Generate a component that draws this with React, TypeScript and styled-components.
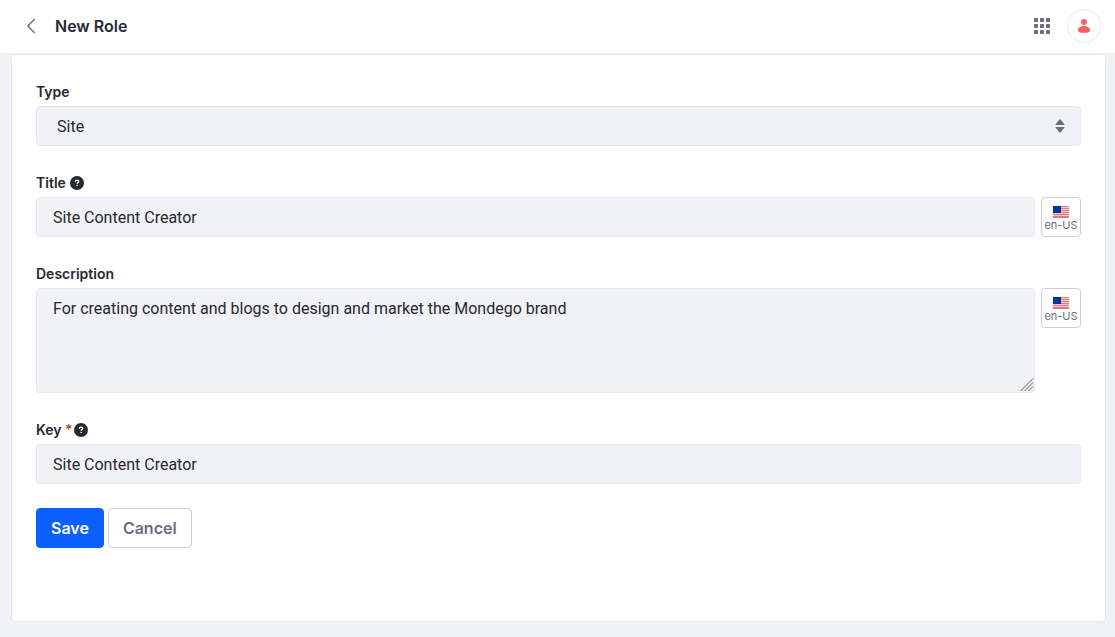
import React from "react";
import styled, { createGlobalStyle } from "styled-components";

const Global = createGlobalStyle`
  *, *::before, *::after { box-sizing: border-box; }
  body {
    margin: 0;
    background: #f1f2f5;
    color: #272833;
    font-family: Inter, "Liberation Sans", sans-serif;
    font-size: 16px;
    line-height: 24px;
  }
  button, input, select, textarea { font: inherit; color: inherit; margin: 0; }
`;

const Header = styled.header`
  display: flex;
  align-items: center;
  height: 53px;
  padding: 0 14px 1px 23px;
  background: #fff;
`;

const BackLink = styled.a`
  display: flex;
  width: 16px;
  height: 16px;
  margin-right: 16px;
  color: #6b6c7e;
`;

const Heading = styled.h1`
  flex: 1;
  margin: 0;
  font-size: 16px;
  font-weight: 600;
`;

const IconButton = styled.button`
  display: flex;
  align-items: center;
  justify-content: center;
  width: 32px;
  height: 32px;
  padding: 0;
  border: 0;
  background: none;
  color: #6b6c7e;
`;

const AvatarButton = styled(IconButton)`
  width: 34px;
  height: 34px;
  margin-left: 9px;
  border: 1px solid #e7e7ed;
  border-radius: 50%;
  color: #ff5f5f;
`;

const Card = styled.main`
  margin: 1px 9px 15px 11px;
  padding: 26px 24px 73px;
  border: 1px solid #e7e7ed;
  border-radius: 4px;
  background: #fff;
`;

const Group = styled.div`
  margin-bottom: 26px;
`;

const LastGroup = styled(Group)`
  margin-bottom: 24px;
`;

const LabelRow = styled.div<{ $tight?: boolean }>`
  display: flex;
  align-items: center;
  gap: ${(p) => (p.$tight ? 1 : 4)}px;
  height: 21px;
  margin-bottom: 4px;
  font-size: 14px;
  font-weight: 600;
  line-height: 21px;
`;

const Required = styled.span`
  color: #b95000;
`;

const Row = styled.div`
  display: flex;
  align-items: flex-start;
  gap: 6px;
`;

const Field = styled.div`
  position: relative;
  display: flex;
  flex: 1;
`;

const Input = styled.input`
  flex: 1;
  min-width: 0;
  height: 40px;
  padding: 0 16px;
  border: 1px solid #e7e7ed;
  border-radius: 4px;
  background: #f1f2f5;
  outline: 0;
  font-family: Roboto, "Liberation Sans", sans-serif;
`;

const Select = styled(Input).attrs({ as: "select" })`
  padding: 2px 32px 0 20px;
  appearance: none;
`;

const TextArea = styled(Input).attrs({ as: "textarea" })`
  height: 105px;
  padding: 8px 16px;
  resize: vertical;
  &::-webkit-resizer { display: none; }
`;

const SelectMark = styled.svg`
  position: absolute;
  top: 12px;
  right: 13px;
  pointer-events: none;
`;

const Grip = styled.svg`
  position: absolute;
  right: 1px;
  bottom: 1px;
  pointer-events: none;
`;

const Button = styled.button<{ $primary?: boolean }>`
  height: 40px;
  padding: 0 14px;
  border: 1px solid ${(p) => (p.$primary ? "#0b5fff" : "#cdced9")};
  border-radius: 4px;
  background: ${(p) => (p.$primary ? "#0b5fff" : "#fff")};
  color: ${(p) => (p.$primary ? "#fff" : "#6b6c7e")};
  font-weight: 600;
`;

const LocaleButton = styled(Button)`
  display: flex;
  flex-direction: column;
  align-items: center;
  justify-content: center;
  gap: 1px;
  width: 40px;
  padding: 3px 0 0;
  font-size: 11px;
  font-weight: 400;
  line-height: 12px;
`;

const Actions = styled.div`
  display: flex;
  gap: 4px;
`;

const Help = () => (
  <svg width="14" height="14" viewBox="0 0 14 14" role="img" aria-label="Help">
    <circle cx="7" cy="7" r="7" fill="#272833" />
    <path d="M5.3 5.7C5.4 4.7 6.1 4.2 7 4.2s1.7.5 1.7 1.3c0 1.1-1.6 1.1-1.6 2.2" fill="none" stroke="#fff" strokeWidth="1.3" />
    <rect x="6.4" y="8.7" width="1.4" height="1.4" rx=".5" fill="#fff" />
  </svg>
);

const Locale = () => (
  <LocaleButton type="button">
    <svg width="16" height="12" viewBox="0 0 16 12" aria-hidden="true">
      <rect width="16" height="12" fill="#f5c9cc" />
      {[0, 2, 4, 6, 8, 10].map((y) => (
        <rect key={y} y={y} width="16" height="1" fill="#df7b81" />
      ))}
      <rect y="11" width="16" height="1" fill="#df7b81" />
      <rect width="8" height="7" fill="#0035a0" />
    </svg>
    en-US
  </LocaleButton>
);

export default function App() {
  return (
    <>
      <Global />
      <Header>
        <BackLink href="#" aria-label="Back">
          <svg width="16" height="16" viewBox="0 0 16 16" fill="none" stroke="currentColor" strokeWidth="1.5" strokeLinecap="round" strokeLinejoin="round">
            <path d="M11.3 1.5 4.8 8l6.5 6.5" />
          </svg>
        </BackLink>
        <Heading>New Role</Heading>
        <IconButton type="button" aria-label="Applications">
          <svg width="16" height="16" viewBox="0 0 16 16" fill="currentColor">
            {[0, 6, 12].map((y) => [0, 6, 12].map((x) => <rect key={`${x}-${y}`} x={x} y={y} width="4" height="4" rx=".4" />))}
          </svg>
        </IconButton>
        <AvatarButton type="button" aria-label="User profile">
          <svg width="12" height="14" viewBox="0 0 12 14" fill="currentColor">
            <circle cx="6" cy="3" r="3" />
            <path d="M6 7c3.600 0 6 1.700 6 4.100C12 13.300 10.300 14 6 14s-6-.7-6-2.900C0 8.700 2.400 7 6 7Z" />
          </svg>
        </AvatarButton>
      </Header>
      <Card>
        <form onSubmit={(e) => e.preventDefault()}>
          <Group>
            <LabelRow><label htmlFor="type">Type</label></LabelRow>
            <Field>
              <Select id="type">
                <option>Site</option>
              </Select>
              <SelectMark width="16" height="16" viewBox="0 0 16 16" fill="#6b6c7e" aria-hidden="true">
                <path d="M3.500 6.500 7.400 1.500Q8 .9 8.600 1.500L12.500 6.500Q12.700 7 12 7H4Q3.300 7 3.500 6.500ZM3.500 9.500 7.400 14.500Q8 15.100 8.600 14.500L12.500 9.500Q12.700 9 12 9H4Q3.300 9 3.500 9.500Z" />
              </SelectMark>
            </Field>
          </Group>
          <Group>
            <LabelRow><label htmlFor="title">Title</label><Help /></LabelRow>
            <Row>
              <Field><Input id="title" defaultValue="Site Content Creator" /></Field>
              <Locale />
            </Row>
          </Group>
          <Group>
            <LabelRow><label htmlFor="description">Description</label></LabelRow>
            <Row>
              <Field>
                <TextArea id="description" defaultValue="For creating content and blogs to design and market the Mondego brand" />
                <Grip width="14" height="14" viewBox="0 0 14 14" stroke="#5c5c60" aria-hidden="true">
                  <path d="M.5 13 13 .5M4.500 13 13 4.500M8.500 13 13 8.500" />
                </Grip>
              </Field>
              <Locale />
            </Row>
          </Group>
          <LastGroup>
            <LabelRow $tight><label htmlFor="key">Key <Required>*</Required></label><Help /></LabelRow>
            <Field><Input id="key" required defaultValue="Site Content Creator" /></Field>
          </LastGroup>
          <Actions>
            <Button type="submit" $primary>Save</Button>
            <Button type="button">Cancel</Button>
          </Actions>
        </form>
      </Card>
    </>
  );
}
